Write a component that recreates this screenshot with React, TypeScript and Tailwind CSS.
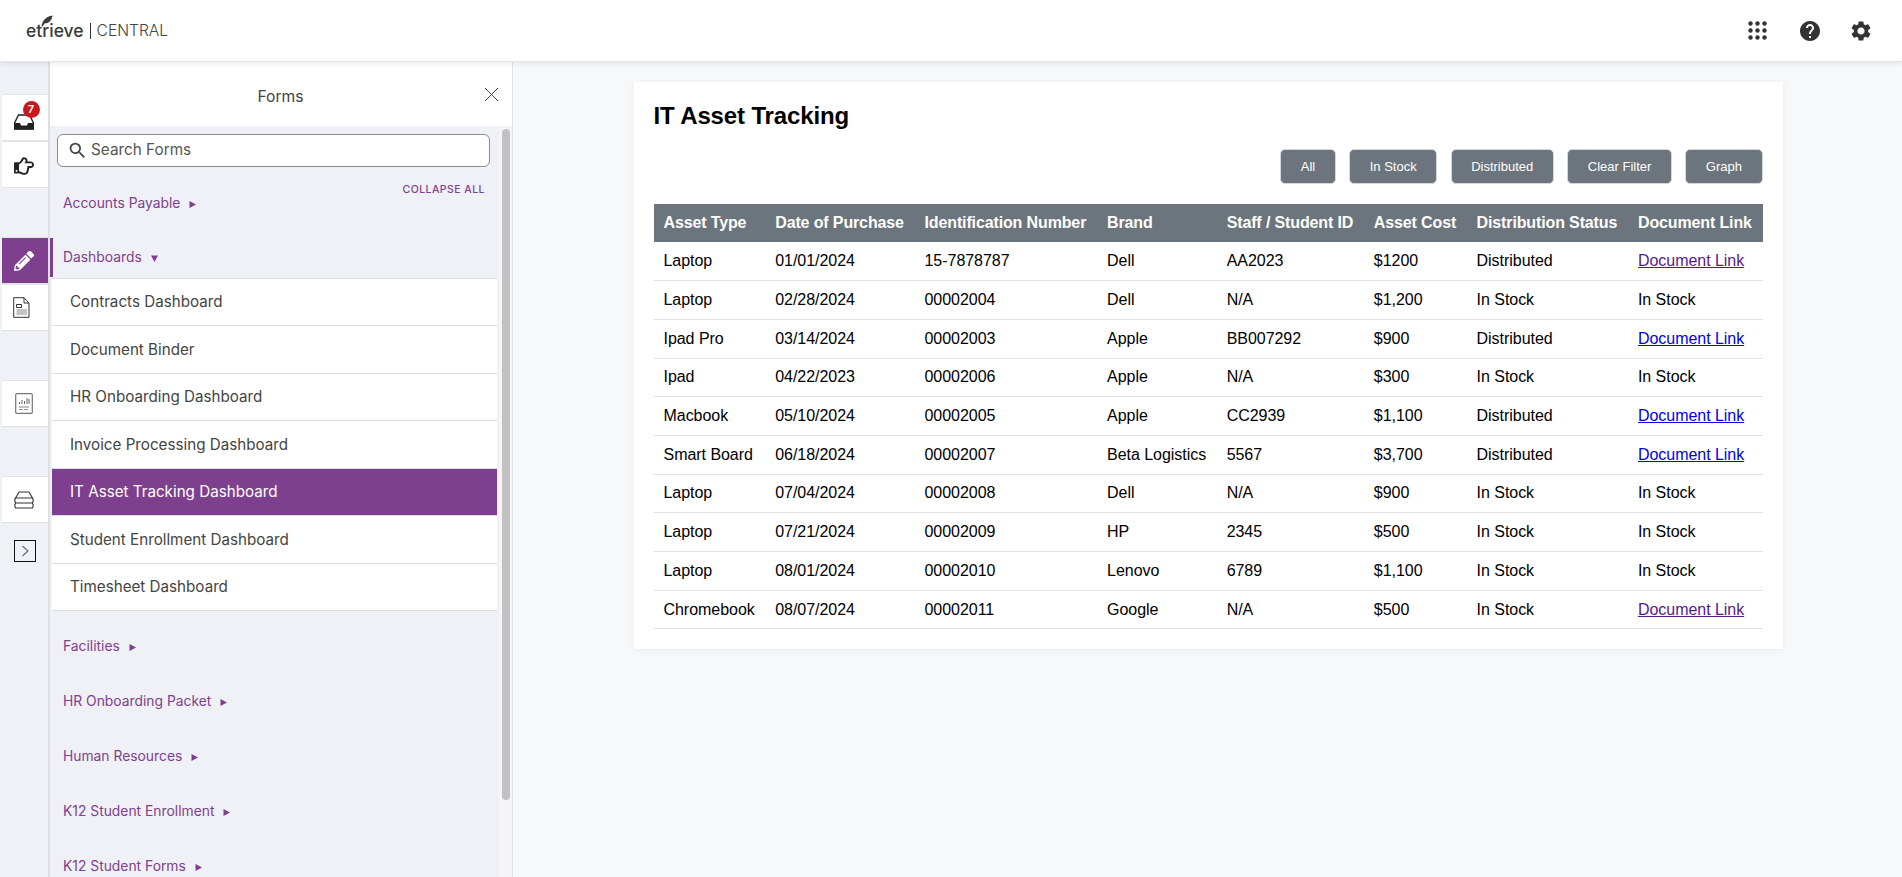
import React from "react";
import { FaPencilAlt, FaRegHandPointRight } from "react-icons/fa";
import { MdHelp, MdSettings, MdSearch } from "react-icons/md";

const rows: [string, string, string, string, string, string, string, string, string?][] = [
  ["Laptop", "01/01/2024", "15-7878787", "Dell", "AA2023", "$1200", "Distributed", "Document Link", "v"],
  ["Laptop", "02/28/2024", "00002004", "Dell", "N/A", "$1,200", "In Stock", "In Stock"],
  ["Ipad Pro", "03/14/2024", "00002003", "Apple", "BB007292", "$900", "Distributed", "Document Link", "b"],
  ["Ipad", "04/22/2023", "00002006", "Apple", "N/A", "$300", "In Stock", "In Stock"],
  ["Macbook", "05/10/2024", "00002005", "Apple", "CC2939", "$1,100", "Distributed", "Document Link", "b"],
  ["Smart Board", "06/18/2024", "00002007", "Beta Logistics", "5567", "$3,700", "Distributed", "Document Link", "b"],
  ["Laptop", "07/04/2024", "00002008", "Dell", "N/A", "$900", "In Stock", "In Stock"],
  ["Laptop", "07/21/2024", "00002009", "HP", "2345", "$500", "In Stock", "In Stock"],
  ["Laptop", "08/01/2024", "00002010", "Lenovo", "6789", "$1,100", "In Stock", "In Stock"],
  ["Chromebook", "08/07/2024", "00002011", "Google", "N/A", "$500", "In Stock", "Document Link", "v"],
];

const heads = ["Asset Type", "Date of Purchase", "Identification Number", "Brand", "Staff / Student ID", "Asset Cost", "Distribution Status", "Document Link"];
const items = ["Contracts Dashboard", "Document Binder", "HR Onboarding Dashboard", "Invoice Processing Dashboard", "IT Asset Tracking Dashboard", "Student Enrollment Dashboard", "Timesheet Dashboard"];
const groupsAfter = ["Facilities", "HR Onboarding Packet", "Human Resources", "K12 Student Enrollment", "K12 Student Forms"];

function Tri({ down }: { down?: boolean }) {
  return (
    <svg width="9" height="9" viewBox="0 0 9 9" className="ml-[8px] mt-[2px] shrink-0 fill-[#7f3f8f]">
      {down ? <path d="M1 1.5H8L4.5 8Z" /> : <path d="M1.5 1L8 4.5L1.5 8Z" />}
    </svg>
  );
}

function Group({ label }: { label: string }) {
  return (
    <div className="mt-[16px] flex h-[39px] items-center pl-[13px] text-[13.85px] text-[#7f3f8f]">
      <span>{label}</span>
      <Tri />
    </div>
  );
}

function RailBtn({ active, children }: { active?: boolean; children: React.ReactNode }) {
  return (
    <div className={"relative flex h-[47px] w-[46px] items-center justify-center border-b border-t border-[#e2e3e7] " + (active ? "bg-[#7f3f8f]" : "bg-white")}>
      {children}
    </div>
  );
}

export default function App() {
  return (
    <div className="flex h-screen flex-col overflow-hidden bg-[#f7f8fa] font-['Inter',sans-serif]">
      <header className="relative z-10 flex h-[62px] shrink-0 items-center justify-between border-b border-[#e4e4e4] bg-white pl-[26px] pr-[29px] shadow-[0_2px_6px_rgba(0,0,0,0.08)]">
        <div className="flex items-center text-[#3a3a3a]">
          <div className="relative text-[17.5px] font-medium leading-none">
            etrieve
            <svg width="12" height="12" viewBox="0 0 12 12" className="absolute left-[15px] top-[-7px] fill-[#3a3a3a]">
              <path d="M0.5 11.5C1 6 5 1.5 11.5 0.5C11 5 8 8.5 3.5 8.5L1.5 11.5Z" />
            </svg>
          </div>
          <div className="mx-[6px] h-[16px] w-px bg-[#333]" />
          <div className="text-[15.6px] font-light leading-none text-[#444]">CENTRAL</div>
        </div>
        <div className="flex items-center text-[#333]">
          <svg width="20" height="20" viewBox="0 0 20 20" className="mr-[30px] fill-[#333]">
            {[2.5, 9.5, 16.5].map((y) => [2.5, 9.5, 16.5].map((x) => <circle key={x + "-" + y} cx={x} cy={y} r="2.2" />))}
          </svg>
          <MdHelp size={24} className="mr-[27px]" />
          <MdSettings size={24} />
        </div>
      </header>

      <div className="flex min-h-0 flex-1">
        <nav className="flex w-[50px] shrink-0 flex-col border-r-[2px] border-[#dfe0e4] bg-[#f0f1f6] pl-[2px] pt-[32px]">
          <RailBtn>
            <svg width="20" height="16" viewBox="0 0 20 16" className="mt-[8px] ml-[-2px]">
              <path d="M4.5 1H15.5L19.5 9V15H0.5V9Z" fill="#fff" stroke="#222" strokeWidth="1.4" />
              <path d="M0.5 9H6L7 11.5H13L14 9H19.5V15.5H0.5Z" fill="#222" />
            </svg>
            <span className="absolute left-[20.5px] top-[6px] flex h-[17px] w-[17px] items-center justify-center rounded-full bg-[#c8171e] text-[11px] font-semibold leading-none text-white">7</span>
          </RailBtn>
          <RailBtn>
            <FaRegHandPointRight size={20} className="ml-[-2px] mt-[2px] text-[#222]" />
          </RailBtn>
          <div className="h-[49px]" />
          <RailBtn active>
            <FaPencilAlt size={20} className="ml-[-2px] text-white" />
          </RailBtn>
          <RailBtn>
            <svg width="17" height="21" viewBox="0 0 17 21" className="ml-[-7px] fill-none stroke-[#333]">
              <path d="M0.7 0.7H11L16 6V20.3H0.7Z" />
              <path d="M11 0.7V6H16" />
              <path d="M3.5 7.5H8.5V10.5H3.5Z" />
              <path d="M3.5 13H14M3.5 15H14M3.5 17H14" stroke="#888" />
            </svg>
          </RailBtn>
          <div className="h-[49px]" />
          <RailBtn>
            <svg width="18" height="21" viewBox="0 0 18 21" className="ml-[-2px] fill-none">
              <rect x="0.7" y="0.7" width="16.6" height="19.6" rx="1" stroke="#777" strokeWidth="1.2" />
              <path d="M4.5 11V9M7 11V7M9.5 11V8M12 11V5M14 11V6" stroke="#666" />
              <path d="M4 14H14M4 16.5H7.5M9 16.5H13" stroke="#888" />
            </svg>
          </RailBtn>
          <div className="h-[49px]" />
          <RailBtn>
            <svg width="20" height="18" viewBox="0 0 20 18" className="ml-[-3px] fill-none stroke-[#333]" strokeWidth="1.1">
              <path d="M1.5 7L5 1H15L18.5 7Z" />
              <path d="M1.5 7L0.7 9.5L1.5 12H18.5L19.3 9.5L18.5 7" />
              <path d="M1.5 12L0.7 14.5L1.5 17H18.5L19.3 14.5L18.5 12" />
            </svg>
          </RailBtn>
          <div className="ml-[12px] mt-[17px] flex h-[22px] w-[22px] items-center justify-center border border-[#111]">
            <svg width="10" height="12" viewBox="0 0 10 12" className="fill-none stroke-[#666]" strokeWidth="1.1">
              <path d="M2.5 1L8 6L2.5 11" />
            </svg>
          </div>
        </nav>

        <aside className="flex w-[463px] shrink-0 flex-col border-r border-[#e2e3e7] bg-white">
          <div className="grid h-[64px] shrink-0 grid-cols-[1fr_auto_1fr] pl-[12px] pr-[13px] pt-[25px]">
            <div />
            <div className="text-[15.7px] leading-[19px] text-[#444]">Forms</div>
            <svg width="15" height="15" viewBox="0 0 15 15" className="justify-self-end fill-none stroke-[#444]">
              <path d="M1 1L14 14M14 1L1 14" />
            </svg>
          </div>
          <div className="flex min-h-0 flex-1">
            <div className="min-w-0 flex-1 overflow-hidden bg-[#f0f1f6]">
              <div className="ml-[7px] mt-[7.5px] flex h-[33px] w-[433px] items-center rounded-[6px] border-[1.5px] border-[#8c8c8c] bg-white pl-[10px] text-[15.3px] text-[#555]">
                <MdSearch size={21} className="ml-[-1px] mr-[3px] text-[#444]" />
                <span>Search Forms</span>
              </div>
              <div className="mt-[17px] flex h-[39px] items-start pl-[13px] pr-[14px] text-[13.85px] text-[#7f3f8f]">
                <div className="flex h-[39px] items-center">
                  <span>Accounts Payable</span>
                  <Tri />
                </div>
                <span className="ml-auto text-[10.5px] font-medium leading-[11px] tracking-[0.45px]">COLLAPSE ALL</span>
              </div>
              <div className="mt-[15px] flex h-[39px] items-center border-l-[3px] border-[#7f3f8f] pl-[10px] text-[13.85px] text-[#7f3f8f]">
                <span>Dashboards</span>
                <Tri down />
              </div>
              <div className="mx-[2px] mt-[1px] border-t border-[#dfe0e4]">
                {items.map((t) => {
                  const sel = t === "IT Asset Tracking Dashboard";
                  return (
                    <div key={t} className={"flex h-[47.5px] items-center border-b border-[#dcdde1] pl-[18px] pt-[2px] text-[15.2px] " + (sel ? "bg-[#7f3f8f] text-white" : "bg-white text-[#444]")}>
                      {t}
                    </div>
                  );
                })}
              </div>
              <div className="mt-[3.5px]">
                {groupsAfter.map((g) => (
                  <Group key={g} label={g} />
                ))}
              </div>
            </div>
            <div className="w-[13px] shrink-0 bg-[#f5f5f7] pl-[2.5px] pt-[3px]">
              <div className="h-[671px] w-[8px] rounded-[4px] bg-[#c1c1c1]" />
            </div>
          </div>
        </aside>

        <main className="flex min-w-0 flex-1 items-start justify-center pl-px pt-[20px] font-['Liberation_Sans',Arial,sans-serif]">
          <section className="w-[1149px] bg-white p-[20px] shadow-[0_1px_6px_rgba(0,0,0,0.06)]">
            <h1 className="text-[24px] font-bold leading-[27px] tracking-[-0.14px] text-black">IT Asset Tracking</h1>
            <div className="mt-[20px] flex justify-end gap-[13.5px]">
              {["All", "In Stock", "Distributed", "Clear Filter", "Graph"].map((b) => (
                <button key={b} className="h-[35px] rounded-[5px] border border-[#d5d7da] bg-[#6c757d] px-[19.5px] text-[13px] text-white">
                  {b}
                </button>
              ))}
            </div>
            <table className="mt-[20px] w-full border-collapse text-[16px] tracking-[-0.04px] text-black">
              <thead>
                <tr className="bg-[#6c757d] text-white">
                  {heads.map((h) => (
                    <th key={h} className="h-[38px] whitespace-nowrap px-[10px] py-0 text-left font-bold tracking-[-0.13px]">
                      {h}
                    </th>
                  ))}
                </tr>
              </thead>
              <tbody>
                {rows.map((r, i) => (
                  <tr key={i} className="border-b border-[#dee2e6]">
                    {r.slice(0, 8).map((c, j) => (
                      <td key={j} className="h-[38.7px] whitespace-nowrap px-[10px] py-0">
                        {j === 7 && r[8] ? (
                          <a href="#" className={"underline " + (r[8] === "v" ? "text-[#551a8b]" : "text-[#0000ee]")}>
                            {c}
                          </a>
                        ) : (
                          c
                        )}
                      </td>
                    ))}
                  </tr>
                ))}
              </tbody>
            </table>
          </section>
        </main>
      </div>
    </div>
  );
}
